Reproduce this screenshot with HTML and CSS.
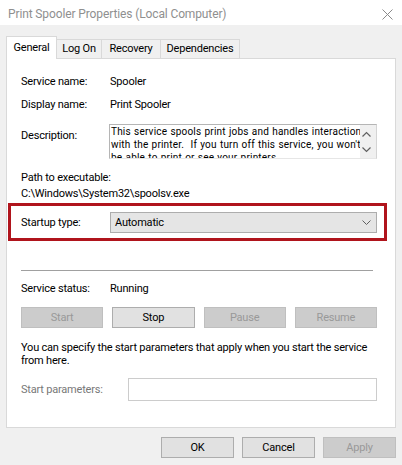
FILE: index.html
```html
<!DOCTYPE html>
<html lang="en">
<head>
<meta charset="utf-8">
<title>Print Spooler Properties (Local Computer)</title>
<link rel="stylesheet" href="styles.css">
</head>
<body>
<div class="window">
  <div class="titlebar">
    <span class="title">Print Spooler Properties (Local Computer)</span>
    <svg class="close" width="11" height="11" viewBox="0 0 11 11"><path d="M0.5 0.5 L10.5 10.5 M10.5 0.5 L0.5 10.5" stroke="#8a8a8a" stroke-width="1" fill="none"/></svg>
  </div>
  <div class="tabs">
    <div class="tab active tab-general">General</div>
    <div class="tab tab-logon">Log On</div>
    <div class="tab tab-recovery">Recovery</div>
    <div class="tab tab-deps">Dependencies</div>
  </div>
  <div class="panel">
    <div class="row first">
      <span class="label">Service name:</span>
      <span class="value">Spooler</span>
    </div>
    <div class="row second">
      <span class="label">Display name:</span>
      <span class="value">Print Spooler</span>
    </div>
    <div class="row desc-row">
      <span class="label desc-label">Description:</span>
      <div class="desc">
        <div class="desc-text">This service spools print jobs and handles interaction<br>with the printer.&nbsp; If you turn off this service, you won't<br>be able to print or see your printers.</div>
        <div class="desc-scroll">
          <svg width="16" height="33" viewBox="0 0 16 33"><path d="M2.5 11.5 L6.5 7.5 L10.5 11.5 M2.5 22.5 L6.5 26.5 L10.5 22.5" stroke="#606060" stroke-width="1.2" fill="none"/></svg>
        </div>
      </div>
    </div>
    <div class="path-label">Path to executable:</div>
    <div class="path-value">C:\Windows\System32\spoolsv.exe</div>
    <div class="highlight">
      <div class="row">
        <span class="label">Startup type:</span>
        <div class="select">
          <span>Automatic</span>
          <svg width="9" height="5" viewBox="0 0 9 5"><path d="M0.5 0.5 L4.5 4.5 L8.5 0.5" stroke="#606060" stroke-width="1" fill="none"/></svg>
        </div>
      </div>
    </div>
    <div class="separator"></div>
    <div class="row status-row">
      <span class="label">Service status:</span>
      <span class="value">Running</span>
    </div>
    <div class="service-buttons">
      <div class="btn disabled">Start</div>
      <div class="btn">Stop</div>
      <div class="btn disabled">Pause</div>
      <div class="btn disabled">Resume</div>
    </div>
    <p class="hint">You can specify the start parameters that apply when you start the service from here.</p>
    <div class="row params-row">
      <span class="label params-label">Start parameters:</span>
      <div class="input"></div>
    </div>
  </div>
  <div class="footer">
    <div class="btn">OK</div>
    <div class="btn">Cancel</div>
    <div class="btn disabled">Apply</div>
  </div>
</div>
</body>
</html>
```

FILE: styles.css
```css
* { box-sizing: border-box; }
html, body { margin: 0; padding: 0; }
body {
  width: 402px;
  height: 465px;
  overflow: hidden;
  background: #f0f0f0;
  font-family: Roboto, "Liberation Sans", Arial, sans-serif;
  font-size: 11px;
  letter-spacing: -0.2px;
  color: #000;
}
.window { width: 402px; height: 465px; background: #f0f0f0; }

.titlebar {
  height: 25px;
  background: #fff;
  display: flex;
  align-items: center;
  justify-content: space-between;
  padding: 4px 9px 0 8px;
}
.title { font-size: 12px; line-height: 15px; color: #8f8f8f; letter-spacing: -0.12px; }
.close { display: block; }

.tabs {
  display: flex;
  align-items: flex-end;
  height: 22px;
  margin: 11px 0 0 6px;
  position: relative;
  z-index: 2;
}
.tab {
  height: 19px;
  border: 1px solid #d9d9d9;
  border-bottom: none;
  background: #f0f0f0;
  text-align: center;
  line-height: 18px;
  margin-left: -1px;
  white-space: nowrap;
}
.tab.active {
  height: 23px;
  margin-bottom: -1px;
  margin-left: 0;
  background: #fff;
  line-height: 21px;
  position: relative;
  z-index: 3;
}
.tab-general { width: 51px; }
.tab-logon { width: 46px; }
.tab-recovery { width: 60px; }
.tab-deps { width: 80px; }

.panel {
  margin-left: 6px;
  width: 390px;
  height: 370px;
  background: #fff;
  border: 1px solid #d9d9d9;
  padding: 15px 18px 0 14px;
  position: relative;
  z-index: 1;
}

.row { display: flex; align-items: center; line-height: 15px; }
.label { width: 89px; flex: none; }
.second { margin-top: 8px; }

.desc-row { margin-top: 12px; align-items: flex-start; }
.desc-label { padding-top: 4px; }
.desc {
  display: flex;
  width: 268px;
  height: 35px;
  margin-left: -1px;
  border: 1px solid #b5b5b5;
  border-right-color: #d4d4d4;
  border-bottom-color: #e6e6e6;
  overflow: hidden;
}
.desc-text {
  flex: 1;
  min-width: 0;
  padding: 0 0 0 1px;
  font-size: 10px;
  letter-spacing: 0.2px;
  word-spacing: 0.5px;
  line-height: 13px;
  white-space: nowrap;
  overflow: hidden;
}
.desc-scroll { width: 16px; flex: none; background: #f0f0f0; }
.desc-scroll svg { display: block; }

.path-label { margin-top: 11px; line-height: 15px; }
.path-value { margin-top: 1px; line-height: 15px; }

.highlight {
  margin-top: 2px;
  margin-left: -13px;
  width: 379px;
  border: 3px solid #b0141c;
  padding: 6px 7px 5px 10px;
}
.select {
  flex: 1;
  height: 21px;
  border: 1px solid #adadad;
  background: #e5e5e5;
  display: flex;
  align-items: center;
  justify-content: space-between;
  padding: 0 5px 0 4px;
}
.select svg { display: block; }

.separator {
  margin-top: 29px;
  width: 352px;
  height: 1px;
  background: #a0a0a0;
}
.status-row { margin-top: 10px; }

.service-buttons {
  margin-top: 11px;
  display: grid;
  grid-template-columns: repeat(4, 1fr);
  column-gap: 9px;
}
.btn {
  height: 21px;
  border: 1px solid #adadad;
  background: #e1e1e1;
  text-align: center;
  line-height: 19px;
  color: #000;
}
.btn.disabled {
  background: #cccccc;
  border-color: #bfbfbf;
  color: #999;
}

.hint { margin: 13px 0 0; line-height: 13px; }

.params-row { margin-top: 11px; }
.params-label { width: 107px; color: #787878; }
.input {
  flex: 1;
  height: 23px;
  border: 1px solid #cccccc;
  background: #fff;
}

.footer {
  margin-top: 9px;
  display: flex;
  justify-content: flex-end;
  gap: 8px;
  padding-right: 6px;
}
.footer .btn { width: 73px; }
```
